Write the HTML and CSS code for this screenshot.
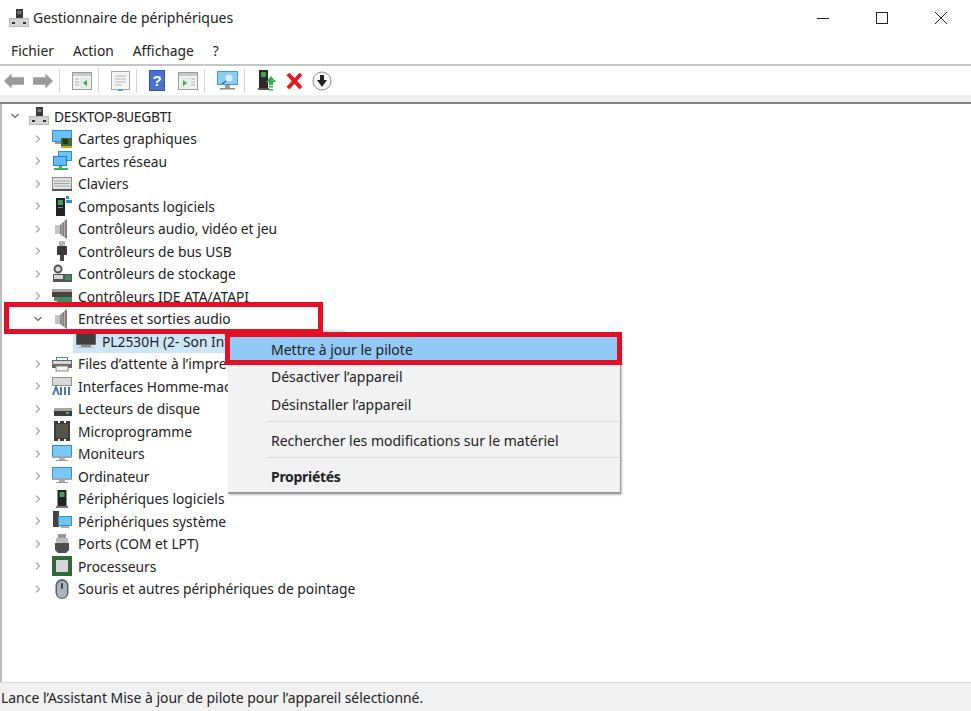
FILE: index.html
```html
<!DOCTYPE html>
<html lang="fr">
<head>
<meta charset="UTF-8" />
<meta name="viewport" content="width=device-width, initial-scale=1" />
<title>Gestionnaire de périphériques</title>
<link rel="stylesheet" href="styles.css">
</head>
<body>

<svg class="defs" width="0" height="0">
  <!-- icones de l'arbre -->
  <symbol id="i-pc" viewBox="0 0 20 20">
    <rect x="7" y="1" width="7" height="9" fill="#3a3a3a"/>
    <rect x="8.500" y="3" width="4" height="3" fill="#777"/>
    <rect x="0" y="10" width="20" height="9" fill="#b9b9b9"/>
    <rect x="1" y="11" width="18" height="7" fill="#d5d5d5"/>
    <rect x="3" y="14" width="3" height="2" fill="#333"/>
    <rect x="14" y="14" width="3" height="2" fill="#333"/>
  </symbol>
  <symbol id="i-gpu" viewBox="0 0 20 20">
    <rect x="0" y="1" width="20" height="12" fill="#2c8fd8"/>
    <rect x="1" y="2" width="18" height="10" fill="#6cc0f2"/>
    <rect x="3" y="13" width="10" height="2" fill="#999"/>
    <rect x="9" y="9" width="11" height="8" fill="#3f6b2e"/>
    <rect x="11" y="10" width="5" height="5" fill="#24351a"/>
    <rect x="9" y="17" width="11" height="2" fill="#d9a326"/>
  </symbol>
  <symbol id="i-net" viewBox="0 0 20 20">
    <rect x="6" y="0" width="14" height="10" fill="#2c8fd8"/>
    <rect x="7" y="1" width="12" height="8" fill="#71c3f3"/>
    <rect x="1" y="5" width="14" height="10" fill="#1f7fca"/>
    <rect x="2" y="6" width="12" height="8" fill="#63bbf0"/>
    <rect x="7" y="15" width="3" height="2" fill="#39b54a"/>
    <rect x="2" y="17" width="14" height="2" fill="#39b54a"/>
  </symbol>
  <symbol id="i-kbd" viewBox="0 0 20 20">
    <rect x="0" y="3" width="20" height="14" fill="#8a8a8a"/>
    <rect x="1" y="4" width="18" height="11" fill="#e2e2e2"/>
    <path d="M2 7h16M2 9.500h16M2 12h16" stroke="#a5a5a5" stroke-width="1"/>
    <rect x="0" y="15" width="20" height="2" fill="#555"/>
  </symbol>
  <symbol id="i-soft" viewBox="0 0 20 20">
    <rect x="4" y="2" width="9" height="18" fill="#222"/>
    <rect x="6" y="4" width="5" height="5" fill="#3aa655"/>
    <rect x="6" y="11" width="5" height="1" fill="#888"/>
    <rect x="14" y="0" width="3" height="3" fill="#2c8fd8"/>
    <rect x="14" y="4" width="6" height="3" fill="#2c8fd8"/>
  </symbol>
  <symbol id="i-spk" viewBox="0 0 20 20">
    <rect x="3" y="6" width="5" height="9" fill="#c4c4c4"/>
    <path d="M8 6l7-6v20l-7-5z" fill="#7f7f7f"/>
    <path d="M10 5v11M12.500 3v15" stroke="#b5b5b5" stroke-width="1"/>
  </symbol>
  <symbol id="i-usb" viewBox="0 0 20 20">
    <rect x="7" y="0" width="6" height="6" fill="#b5b5b5"/>
    <rect x="5" y="5" width="10" height="9" rx="1" fill="#3a3a3a"/>
    <rect x="8" y="14" width="4" height="6" fill="#444"/>
  </symbol>
  <symbol id="i-disk" viewBox="0 0 20 20">
    <circle cx="6" cy="5" r="3.500" fill="#ddd" stroke="#555" stroke-width="2"/>
    <rect x="1" y="10" width="19" height="8" fill="#555"/>
    <rect x="2" y="11" width="9" height="4" fill="#d6d6d6"/>
    <rect x="13" y="11" width="6" height="5" fill="#3f8f5a"/>
  </symbol>
  <symbol id="i-ide" viewBox="0 0 20 20">
    <rect x="0" y="3" width="20" height="3" fill="#a5a5a5"/>
    <rect x="0" y="6" width="20" height="5" fill="#444"/>
    <rect x="5" y="11" width="15" height="7" fill="#3f8f5a"/>
    <rect x="2" y="11" width="4" height="4" fill="#777"/>
  </symbol>
  <symbol id="i-mon" viewBox="0 0 22 18">
    <rect x="1" y="0" width="20" height="13" rx="1" fill="#666"/>
    <rect x="2" y="1" width="18" height="11" fill="#3e3e3e"/>
    <rect x="6" y="13" width="10" height="2" fill="#8c8c8c"/>
    <rect x="3" y="15" width="16" height="1" fill="#b5b5b5"/>
  </symbol>
  <symbol id="i-prn" viewBox="0 0 20 20">
    <rect x="4" y="3" width="12" height="4" fill="#2c8fb8"/>
    <rect x="5" y="4" width="10" height="2" fill="#fff"/>
    <rect x="0" y="6" width="20" height="8" fill="#666"/>
    <rect x="1" y="7" width="18" height="3" fill="#d6d6d6"/>
    <rect x="4" y="12" width="12" height="5" fill="#f2f2f2" stroke="#888" stroke-width="1"/>
  </symbol>
  <symbol id="i-hid" viewBox="0 0 20 20">
    <rect x="0" y="1" width="20" height="9" fill="#8f8f8f"/>
    <rect x="1" y="2" width="18" height="7" fill="#dadada"/>
    <path d="M1 19l3-8 3 8M9 19v-8M13 19v-8M17 11v8" fill="none" stroke="#4d78a8" stroke-width="2"/>
  </symbol>
  <symbol id="i-hdd" viewBox="0 0 20 20">
    <rect x="2" y="9" width="18" height="3" fill="#a5a5a5"/>
    <rect x="2" y="12" width="18" height="5" fill="#3c3c3c"/>
    <rect x="14" y="13" width="3" height="2" fill="#3fbf60"/>
  </symbol>
  <symbol id="i-chip" viewBox="0 0 20 20">
    <path d="M2 0h4v2h2V0h4v2h2V0h4v20h-4v-2h-2v2H8v-2H6v2H2z" fill="#3c3c3c"/>
    <rect x="4" y="3" width="12" height="14" fill="#55554c"/>
  </symbol>
  <symbol id="i-scr" viewBox="0 0 20 20">
    <rect x="0" y="1" width="20" height="13" fill="#2c8fd8"/>
    <rect x="1" y="2" width="18" height="10" fill="#79c8f5"/>
    <rect x="0" y="12" width="20" height="2" fill="#9aa7b0"/>
    <rect x="7" y="14" width="6" height="2" fill="#aaa"/>
    <rect x="4" y="16" width="12" height="1" fill="#999"/>
  </symbol>
  <symbol id="i-tower" viewBox="0 0 20 20">
    <rect x="5.500" y="1" width="9" height="16" fill="#222"/>
    <rect x="7.500" y="3" width="5" height="5" fill="#4a9a5e"/>
    <rect x="4" y="17" width="12" height="2" fill="#777"/>
  </symbol>
  <symbol id="i-sys" viewBox="0 0 20 20">
    <rect x="1" y="0" width="6" height="16" fill="#444"/>
    <rect x="6" y="5" width="14" height="10" fill="#2c8fd8"/>
    <rect x="7" y="6" width="12" height="8" fill="#71c3f3"/>
    <rect x="9" y="15" width="8" height="2" fill="#aaa"/>
  </symbol>
  <symbol id="i-port" viewBox="0 0 20 20">
    <rect x="6" y="0" width="8" height="4" fill="#999"/>
    <rect x="4" y="4" width="12" height="5" fill="#bbb"/>
    <path d="M3 9h14v7l-3 3H6l-3-3z" fill="#4f4f4f"/>
  </symbol>
  <symbol id="i-cpu" viewBox="0 0 20 20">
    <rect x="0" y="0" width="20" height="20" fill="#2f6b3a"/>
    <rect x="4" y="4" width="12" height="12" fill="#d6d6d6"/>
  </symbol>
  <symbol id="i-mouse" viewBox="0 0 20 20">
    <rect x="3.500" y="0" width="13" height="20" rx="6.500" fill="#59616b"/>
    <rect x="5" y="2" width="10" height="17" rx="5" fill="#a9b4c0"/>
    <rect x="9" y="4" width="2" height="6" rx="1" fill="#3a3f46"/>
  </symbol>
</svg>

<div class="window">

  <header class="titlebar">
    <svg class="title-icon" width="20" height="20"><use href="#i-pc"/></svg>
    <span>Gestionnaire de périphériques</span>
    <div class="caption">
      <svg width="14" height="14" viewBox="0 0 14 14"><path d="M1 7.500h12" stroke="#222" stroke-width="1"/></svg>
      <svg width="14" height="14" viewBox="0 0 14 14"><rect x="1.500" y="1.500" width="11" height="11" fill="none" stroke="#222" stroke-width="1"/></svg>
      <svg width="14" height="14" viewBox="0 0 14 14"><path d="M1 1l12 12M13 1L1 13" stroke="#222" stroke-width="1"/></svg>
    </div>
  </header>

  <nav class="menubar">
    <span>Fichier</span>
    <span>Action</span>
    <span>Affichage</span>
    <span>?</span>
  </nav>

  <div class="toolbar">
    <svg width="20" height="16" viewBox="0 0 21 16"><path d="M8 0L0 8l8 8v-4h13V4H8z" fill="#9a9a9a"/></svg>
    <svg class="gap-9" width="20" height="16" viewBox="0 0 21 16"><path d="M13 0l8 8-8 8v-4H0V4h13z" fill="#9a9a9a"/></svg>
    <i class="sep"></i>
    <svg width="20" height="18" viewBox="0 0 20 18"><rect x=".5" y=".5" width="19" height="17" fill="#f4f4f4" stroke="#9a9a9a"/><rect x="1" y="1" width="18" height="3" fill="#c9c9c9"/><path d="M3 7h4M3 10h4M3 13h4" stroke="#aaa"/><rect x="8" y="5" width="10" height="11" fill="#e4efe4"/><path d="M15 8v6l-4-3z" fill="#3aa655"/></svg>
    <i class="sep"></i>
    <svg width="19" height="20" viewBox="0 0 19 20"><rect x=".5" y=".5" width="18" height="18" fill="#f6f6f6" stroke="#a5a5a5"/><path d="M4 5h11M4 8h11M4 11h11M4 14h7" stroke="#b5b5b5"/><path d="M7 19h5" stroke="#4aa3d8" stroke-width="2"/></svg>
    <i class="sep"></i>
    <svg width="16" height="21" viewBox="0 0 16 21"><rect width="16" height="21" fill="#2f55b5"/><rect x="1" y="1" width="14" height="19" fill="#4a72cf"/><text x="8" y="16" text-anchor="middle" class="help-q">?</text></svg>
    <svg class="gap-13" width="20" height="18" viewBox="0 0 20 18"><rect x=".5" y=".5" width="19" height="17" fill="#f4f4f4" stroke="#9a9a9a"/><rect x="1" y="1" width="18" height="3" fill="#c9c9c9"/><path d="M13 7h4M13 10h4M13 13h4" stroke="#aaa"/><rect x="2" y="5" width="10" height="11" fill="#e4efe4"/><path d="M5 8v6l4-3z" fill="#3aa655"/></svg>
    <i class="sep"></i>
    <svg width="21" height="20" viewBox="0 0 21 20"><rect x="0" y="0" width="21" height="14" fill="#3f9bdc"/><rect x="1" y="1" width="19" height="12" fill="#8ccdf3"/><circle cx="12" cy="7" r="3.500" fill="#d8eefb"/><path d="M9 10l-4 3" stroke="#2c6c9c" stroke-width="1.500"/><rect x="8" y="14" width="5" height="3" fill="#9a9a9a"/><rect x="3" y="17" width="15" height="1.500" fill="#8a8a8a"/></svg>
    <i class="sep"></i>
    <svg class="gap-1" width="18" height="21" viewBox="0 0 18 21"><rect x="1" y="0" width="9" height="18" fill="#2a2a2a"/><rect x="3" y="2" width="5" height="5" fill="#3aa655"/><rect x="0" y="18" width="11" height="2" fill="#555"/><path d="M13 6l5 6h-3v3h-4v-3H8z" fill="#2fb344"/><path d="M11 16h4v1.500h-4zM11 19h4v1.500h-4z" fill="#2fb344"/></svg>
    <svg class="gap-10" width="17" height="16" viewBox="0 0 17 16"><path d="M2 1l13 14M15 1L2 15" stroke="#e01b24" stroke-width="4"/></svg>
    <svg class="gap-9" width="20" height="20" viewBox="0 0 20 20"><circle cx="10" cy="10" r="9" fill="#f8f8f8" stroke="#8c8c8c"/><path d="M8 4h4v5h3l-5 7-5-7h3z" fill="#222"/></svg>
  </div>
  <div class="toolbar-edge"></div>

  <main class="tree">
    <div class="row root">
      <svg class="chev" width="10" height="10" viewBox="0 0 10 10"><path d="M1.500 3l3.500 3.500L8.500 3" fill="none" stroke="#666" stroke-width="1.200"/></svg>
      <svg class="ico" width="20" height="20"><use href="#i-pc"/></svg>
      <span>DESKTOP-8UEGBTI</span>
    </div>
    <div class="row">
      <svg class="chev" width="10" height="10" viewBox="0 0 10 10"><path d="M3 1.500L6.500 5 3 8.500" fill="none" stroke="#a6a6a6" stroke-width="1.200"/></svg>
      <svg class="ico" width="20" height="20"><use href="#i-gpu"/></svg>
      <span>Cartes graphiques</span>
    </div>
    <div class="row">
      <svg class="chev" width="10" height="10" viewBox="0 0 10 10"><path d="M3 1.500L6.500 5 3 8.500" fill="none" stroke="#a6a6a6" stroke-width="1.200"/></svg>
      <svg class="ico" width="20" height="20"><use href="#i-net"/></svg>
      <span>Cartes réseau</span>
    </div>
    <div class="row">
      <svg class="chev" width="10" height="10" viewBox="0 0 10 10"><path d="M3 1.500L6.500 5 3 8.500" fill="none" stroke="#a6a6a6" stroke-width="1.200"/></svg>
      <svg class="ico" width="20" height="20"><use href="#i-kbd"/></svg>
      <span>Claviers</span>
    </div>
    <div class="row">
      <svg class="chev" width="10" height="10" viewBox="0 0 10 10"><path d="M3 1.500L6.500 5 3 8.500" fill="none" stroke="#a6a6a6" stroke-width="1.200"/></svg>
      <svg class="ico" width="20" height="20"><use href="#i-soft"/></svg>
      <span>Composants logiciels</span>
    </div>
    <div class="row">
      <svg class="chev" width="10" height="10" viewBox="0 0 10 10"><path d="M3 1.500L6.500 5 3 8.500" fill="none" stroke="#a6a6a6" stroke-width="1.200"/></svg>
      <svg class="ico" width="20" height="20"><use href="#i-spk"/></svg>
      <span>Contrôleurs audio, vidéo et jeu</span>
    </div>
    <div class="row">
      <svg class="chev" width="10" height="10" viewBox="0 0 10 10"><path d="M3 1.500L6.500 5 3 8.500" fill="none" stroke="#a6a6a6" stroke-width="1.200"/></svg>
      <svg class="ico" width="20" height="20"><use href="#i-usb"/></svg>
      <span>Contrôleurs de bus USB</span>
    </div>
    <div class="row">
      <svg class="chev" width="10" height="10" viewBox="0 0 10 10"><path d="M3 1.500L6.500 5 3 8.500" fill="none" stroke="#a6a6a6" stroke-width="1.200"/></svg>
      <svg class="ico" width="20" height="20"><use href="#i-disk"/></svg>
      <span>Contrôleurs de stockage</span>
    </div>
    <div class="row">
      <svg class="chev" width="10" height="10" viewBox="0 0 10 10"><path d="M3 1.500L6.500 5 3 8.500" fill="none" stroke="#a6a6a6" stroke-width="1.200"/></svg>
      <svg class="ico" width="20" height="20"><use href="#i-ide"/></svg>
      <span>Contrôleurs IDE ATA/ATAPI</span>
    </div>
    <div class="row">
      <svg class="chev" width="10" height="10" viewBox="0 0 10 10"><path d="M1.500 3l3.500 3.500L8.500 3" fill="none" stroke="#666" stroke-width="1.200"/></svg>
      <svg class="ico" width="20" height="20"><use href="#i-spk"/></svg>
      <span>Entrées et sorties audio</span>
    </div>
    <div class="row child">
      <svg class="ico" width="22" height="18"><use href="#i-mon"/></svg>
      <span>PL2530H (2- Son Int</span>
    </div>
    <div class="row">
      <svg class="chev" width="10" height="10" viewBox="0 0 10 10"><path d="M3 1.500L6.500 5 3 8.500" fill="none" stroke="#a6a6a6" stroke-width="1.200"/></svg>
      <svg class="ico" width="20" height="20"><use href="#i-prn"/></svg>
      <span>Files d’attente à l’impre</span>
    </div>
    <div class="row">
      <svg class="chev" width="10" height="10" viewBox="0 0 10 10"><path d="M3 1.500L6.500 5 3 8.500" fill="none" stroke="#a6a6a6" stroke-width="1.200"/></svg>
      <svg class="ico" width="20" height="20"><use href="#i-hid"/></svg>
      <span>Interfaces Homme-mac</span>
    </div>
    <div class="row">
      <svg class="chev" width="10" height="10" viewBox="0 0 10 10"><path d="M3 1.500L6.500 5 3 8.500" fill="none" stroke="#a6a6a6" stroke-width="1.200"/></svg>
      <svg class="ico" width="20" height="20"><use href="#i-hdd"/></svg>
      <span>Lecteurs de disque</span>
    </div>
    <div class="row">
      <svg class="chev" width="10" height="10" viewBox="0 0 10 10"><path d="M3 1.500L6.500 5 3 8.500" fill="none" stroke="#a6a6a6" stroke-width="1.200"/></svg>
      <svg class="ico" width="20" height="20"><use href="#i-chip"/></svg>
      <span>Microprogramme</span>
    </div>
    <div class="row">
      <svg class="chev" width="10" height="10" viewBox="0 0 10 10"><path d="M3 1.500L6.500 5 3 8.500" fill="none" stroke="#a6a6a6" stroke-width="1.200"/></svg>
      <svg class="ico" width="20" height="20"><use href="#i-scr"/></svg>
      <span>Moniteurs</span>
    </div>
    <div class="row">
      <svg class="chev" width="10" height="10" viewBox="0 0 10 10"><path d="M3 1.500L6.500 5 3 8.500" fill="none" stroke="#a6a6a6" stroke-width="1.200"/></svg>
      <svg class="ico" width="20" height="20"><use href="#i-scr"/></svg>
      <span>Ordinateur</span>
    </div>
    <div class="row">
      <svg class="chev" width="10" height="10" viewBox="0 0 10 10"><path d="M3 1.500L6.500 5 3 8.500" fill="none" stroke="#a6a6a6" stroke-width="1.200"/></svg>
      <svg class="ico" width="20" height="20"><use href="#i-tower"/></svg>
      <span>Périphériques logiciels</span>
    </div>
    <div class="row">
      <svg class="chev" width="10" height="10" viewBox="0 0 10 10"><path d="M3 1.500L6.500 5 3 8.500" fill="none" stroke="#a6a6a6" stroke-width="1.200"/></svg>
      <svg class="ico" width="20" height="20"><use href="#i-sys"/></svg>
      <span>Périphériques système</span>
    </div>
    <div class="row">
      <svg class="chev" width="10" height="10" viewBox="0 0 10 10"><path d="M3 1.500L6.500 5 3 8.500" fill="none" stroke="#a6a6a6" stroke-width="1.200"/></svg>
      <svg class="ico" width="20" height="20"><use href="#i-port"/></svg>
      <span>Ports (COM et LPT)</span>
    </div>
    <div class="row">
      <svg class="chev" width="10" height="10" viewBox="0 0 10 10"><path d="M3 1.500L6.500 5 3 8.500" fill="none" stroke="#a6a6a6" stroke-width="1.200"/></svg>
      <svg class="ico" width="20" height="20"><use href="#i-cpu"/></svg>
      <span>Processeurs</span>
    </div>
    <div class="row">
      <svg class="chev" width="10" height="10" viewBox="0 0 10 10"><path d="M3 1.500L6.500 5 3 8.500" fill="none" stroke="#a6a6a6" stroke-width="1.200"/></svg>
      <svg class="ico" width="20" height="20"><use href="#i-mouse"/></svg>
      <span>Souris et autres périphériques de pointage</span>
    </div>
  </main>

  <footer class="statusbar">Lance l’Assistant Mise à jour de pilote pour l’appareil sélectionné.</footer>
</div>

<!-- menu contextuel -->
<div class="ctx">
  <div class="ctx-item active">Mettre à jour le pilote</div>
  <div class="ctx-item">Désactiver l’appareil</div>
  <div class="ctx-item">Désinstaller l’appareil</div>
  <div class="ctx-sep"></div>
  <div class="ctx-item">Rechercher les modifications sur le matériel</div>
  <div class="ctx-sep"></div>
  <div class="ctx-item bold">Propriétés</div>
</div>

<!-- cadres rouges -->
<div class="mark mark-row"></div>
<div class="mark mark-item"></div>

</body>
</html>
```

FILE: styles.css
```css
* {
  box-sizing: border-box;
}
body {
  margin: 0;
  font-family: "Noto Sans", "Open Sans", sans-serif;
  font-size: 14px;
  color: #222;
  background: #fff;
  overflow: hidden;
}
.defs {
  position: absolute;
}
.window {
  display: flex;
  flex-direction: column;
  height: 711px;
}

/* Barre de titre */
.titlebar {
  display: flex;
  align-items: center;
  height: 35px;
  padding-left: 9px;
}
.title-icon {
  margin-right: 4px;
}
.caption {
  display: flex;
  gap: 45px;
  margin-left: auto;
  margin-right: 23px;
}

/* Menu */
.menubar {
  display: flex;
  gap: 19px;
  align-items: center;
  height: 31px;
  padding: 1px 0 0 11px;
  border-bottom: 2px solid #c6c6c6;
  font-size: 13.8px;
}

/* Barre d'outils */
.toolbar {
  display: flex;
  align-items: center;
  height: 29px;
  padding-left: 4px;
}
.sep {
  width: 1px;
  height: 24px;
  margin: 0 12px 0 6px;
  background: #d4d4d4;
}
.gap-1 {
  margin-left: 1px;
}
.gap-9 {
  margin-left: 9px;
}
.gap-10 {
  margin-left: 10px;
}
.gap-13 {
  margin-left: 13px;
}
.help-q {
  font-family: "Liberation Sans", sans-serif;
  font-size: 15px;
  font-weight: bold;
  fill: #fff;
}
.toolbar-edge {
  height: 9px;
  background: #f1f1f1;
  border-bottom: 2px solid #828282;
}

/* Arbre */
.tree {
  flex: 1;
  padding-top: 1px;
  border-left: 2px solid #bcbcbc;
  font-size: 13.8px;
}
.row {
  display: flex;
  align-items: center;
  height: 22.5px;
  padding-left: 31px;
  white-space: nowrap;
}
.row.root {
  padding-left: 8px;
  letter-spacing: -0.3px;
}
.row.root .ico {
  margin-right: 5px;
}
.chev {
  flex: none;
  margin-right: 9px;
}
.ico {
  flex: none;
  margin-right: 6px;
}
.row.child {
  margin-left: 71px;
  padding-left: 2px;
  width: 272px;
  background: #cde6f9;
}
.row.child .ico {
  margin-right: 5px;
}

/* Barre d'etat */
.statusbar {
  height: 29px;
  padding-left: 1px;
  line-height: 30px;
  background: #f1f1f1;
  border-top: 1px solid #d9d9d9;
  font-size: 13.95px;
}

/* Menu contextuel */
.ctx {
  position: absolute;
  left: 228px;
  top: 334px;
  width: 393px;
  height: 160px;
  padding: 2px 1px 0 2px;
  background: #f2f2f2;
  border-right: 1px solid #9a9a9a;
  border-bottom: 2px solid #9a9a9a;
  box-shadow: 1px 1px 2px rgba(0, 0, 0, 0.25);
}
.ctx-item {
  height: 28px;
  line-height: 28px;
  padding-left: 41px;
}
.ctx-item.active {
  height: 27px;
  background: #91c9f7;
}
.ctx-item.bold {
  font-weight: bold;
  letter-spacing: -0.3px;
}
.ctx-sep {
  height: 1px;
  margin: 2px 0 5px 37px;
  background: #dcdcdc;
}

/* Cadres rouges */
.mark {
  position: absolute;
  border: 5px solid #e30f24;
}
.mark-row {
  left: 4px;
  top: 302px;
  width: 319px;
  height: 32px;
}
.mark-item {
  left: 225px;
  top: 332px;
  width: 397px;
  height: 33px;
}
```
